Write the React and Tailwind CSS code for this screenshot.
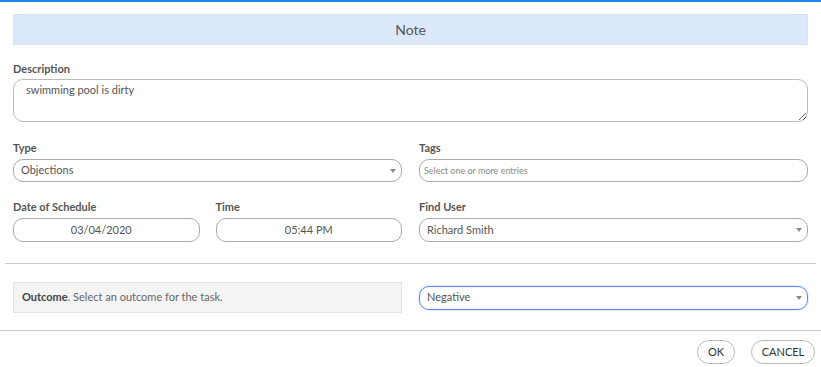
const Label = ({ children }) => (
  <div className="h-[16px] text-[11px] font-bold leading-[16px] text-[#555]">{children}</div>
);

const Arrow = () => (
  <svg width="6" height="4" viewBox="0 0 6 4" className="mr-[5px]">
    <path d="M0 0 L6 0 L3 4 Z" fill="#888" />
  </svg>
);

const Select = ({ value, focus, h = "h-[24px]" }) => (
  <div
    className={`flex ${h} items-center justify-between rounded-[10px] border pl-[7px] text-[11px] text-[#555] ${
      focus ? "border-[#5b8fe8] shadow-[0_0_2px_#9bbcf2]" : "border-[#aaa]"
    }`}
  >
    <span>{value}</span>
    <Arrow />
  </div>
);

export default function App() {
  return (
    <div
      className="h-[367px] w-[821px] border-t-2 border-[#1e88e5] bg-white"
      style={{ fontFamily: "Lato, 'Open Sans', sans-serif" }}
    >
      <div className="px-[13px] pt-[12px]">
        <div className="flex h-[31px] items-center justify-center border border-[#dfe3e8] bg-[#dce9fb] text-[14px] text-[#555]">
          Note
        </div>

        <div className="mt-[16px]">
          <Label>Description</Label>
          <textarea
            readOnly
            value="swimming pool is dirty"
            className="mt-[2px] block h-[43px] w-full resize-y rounded-[10px] border border-[#bbb] px-[12px] py-[2px] text-[11px] text-[#555] outline-none"
          />
        </div>

        <div className="mt-[18px] grid grid-cols-2 gap-x-[17px]">
          <div>
            <Label>Type</Label>
            <div className="mt-[3px]">
              <Select value="Objections" h="h-[23px]" />
            </div>
          </div>
          <div>
            <Label>Tags</Label>
            <div className="mt-[3px] flex h-[23px] items-center rounded-[10px] border border-[#aaa] pl-[4px] text-[9px] text-[#888]">
              Select one or more entries
            </div>
          </div>
        </div>

        <div className="mt-[17px] grid grid-cols-2 gap-x-[17px]">
          <div className="flex gap-x-[16px]">
            <div className="flex-1">
              <Label>Date of Schedule</Label>
              <div className="mt-[3px] flex h-[24px] items-center justify-center rounded-[10px] border border-[#aaa] pr-[10px] text-[11px] text-[#555]">
                03/04/2020
              </div>
            </div>
            <div className="flex-1">
              <Label>Time</Label>
              <div className="mt-[3px] flex h-[24px] items-center justify-center rounded-[10px] border border-[#aaa] text-[11px] text-[#555]">
                05:44 PM
              </div>
            </div>
          </div>
          <div>
            <Label>Find User</Label>
            <div className="mt-[3px]">
              <Select value="Richard Smith" />
            </div>
          </div>
        </div>
      </div>

      <div className="mx-[5px] mt-[21px] border-t border-[#ccc]" />

      <div className="grid grid-cols-2 items-center gap-x-[17px] px-[13px] pt-[18px]">
        <div className="flex h-[31px] items-center border border-[#e3e3e3] bg-[#f4f4f4] pl-[8px] text-[11px] text-[#666]">
          <span className="font-bold text-[#444]">Outcome</span>. Select an outcome for the task.
        </div>
        <Select value="Negative" focus />
      </div>

      <div className="mt-[17px] border-t border-[#ccc]" />

      <div className="flex justify-end gap-x-[16px] pr-[6px] pt-[9px]">
        <button className="h-[24px] w-[38px] rounded-full border border-[#bbb] text-[11px] text-[#333]">
          OK
        </button>
        <button className="h-[24px] w-[64px] rounded-full border border-[#bbb] text-[11px] text-[#333]">
          CANCEL
        </button>
      </div>
    </div>
  );
}
